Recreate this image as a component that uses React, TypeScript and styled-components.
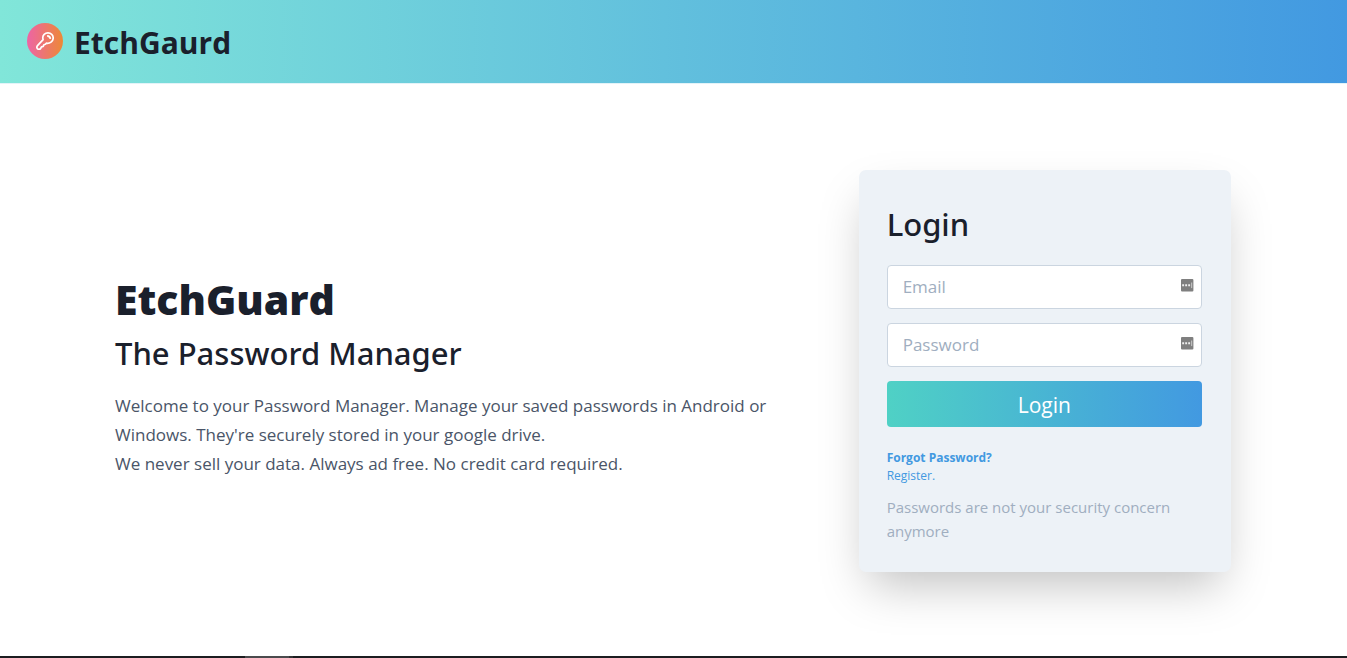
import React from "react";
import styled, { createGlobalStyle } from "styled-components";

const GlobalStyle = createGlobalStyle`
  *, *::before, *::after { box-sizing: border-box; }
  body {
    margin: 0;
    background: #fff;
    color: #1a202c;
    font-family: "Open Sans", "Noto Sans", sans-serif;
  }
  h1, h2, p { margin: 0; }
`;

const Page = styled.div`
  min-height: 100vh;
  display: flex;
  flex-direction: column;
`;

const Header = styled.header`
  display: flex;
  align-items: center;
  padding: 17px 27px 18px;
  border-bottom: 1px solid #e3f3f8;
  background: linear-gradient(to right, #81e6d9, #4299e1);
  background-clip: padding-box;
`;

const Brand = styled.a`
  display: flex;
  align-items: center;
  gap: 11px;
  color: inherit;
  text-decoration: none;
`;

const Badge = styled.span`
  display: flex;
  align-items: center;
  justify-content: center;
  width: 36px;
  height: 36px;
  border-radius: 50%;
  background: linear-gradient(to right, #ed64a6, #ed8936);
`;

const BrandName = styled.span`
  padding-top: 4px;
  font-size: 30px;
  line-height: 44px;
  font-weight: 700;
`;

const Main = styled.main`
  flex: 1;
  display: grid;
  grid-template-columns: minmax(0, 2fr) minmax(0, 1fr);
  align-items: center;
  width: 100%;
  max-width: 1261px;
  margin: 0 auto;
  padding: 86px 73px 84px 71px;
`;

const Hero = styled.section`
  padding: 5px 58px 0 1px;
`;

const HeroTitle = styled.h1`
  font-size: 41px;
  line-height: 58px;
  font-weight: 800;
`;

const Heading = styled.h2`
  font-family: "Noto Sans", "Open Sans", sans-serif;
  font-size: 31px;
  line-height: 50px;
  font-weight: 500;
`;

const HeroText = styled.p`
  margin-top: 13px;
  color: #4a5568;
  font-size: 17px;
  line-height: 29px;
`;

const Card = styled.form`
  display: flex;
  flex-direction: column;
  padding: 29px 29px 29px 28px;
  border-radius: 7px;
  background: #edf2f7;
  box-shadow: 0 22px 45px -10px rgba(0, 0, 0, 0.25);
`;

const CardTitle = styled(Heading)`
  margin-bottom: 16px;
`;

const Field = styled.label`
  position: relative;
  display: block;
  margin-bottom: 14px;
`;

const Input = styled.input`
  display: block;
  width: 100%;
  height: 44px;
  padding: 0 36px 2px 15px;
  border: 1px solid #cbd5e0;
  border-radius: 4px;
  background: #fff;
  color: #4a5568;
  font: inherit;
  font-size: 17px;
  &::placeholder { color: #a0aec0; opacity: 1; }
`;

const FillIcon = styled.svg`
  position: absolute;
  top: 14px;
  right: 8px;
  width: 13px;
  height: 13px;
`;

const Submit = styled.button`
  height: 46px;
  margin-bottom: 22px;
  padding: 2px 0 0;
  border: 0;
  border-radius: 4px;
  background: linear-gradient(to right, #4fd1c5, #4299e1);
  color: #fff;
  font: inherit;
  font-size: 21px;
`;

const FormLink = styled.a<{ $strong?: boolean }>`
  align-self: flex-start;
  color: #4299e1;
  font-size: 12px;
  line-height: 18px;
  font-weight: ${(p) => (p.$strong ? 700 : 400)};
  text-decoration: none;
`;

const Note = styled.p`
  margin-top: 10px;
  color: #a0aec0;
  font-size: 15px;
  line-height: 24px;
`;

const Strip = styled.footer`
  height: 2px;
  background: linear-gradient(to right, #1c1d20 245px, #4b4b4d 245px, #4b4b4d 289px, #333335 289px, #333335 293px, #1c1d20 293px);
`;

function KeyIcon() {
  return (
    <svg width="18" height="18" viewBox="0 0 18 18" fill="none" stroke="#fff" strokeWidth="1.7" strokeLinecap="round" strokeLinejoin="round" aria-hidden="true">
      <path d="M7.1 7.7 1.5 13.6C.3 15 .9 16.7 2.2 17.2c1.1.4 2-.2 2.5-.8l.8-1.6 1.7-.4.7-1.6 1.5-.5.9-1.1c3.6.5 6.8-1.7 6.9-5.2C17.2 2.9 14.9.9 12 .9 8.8.9 6.700 3.2 6.8 5.8c0 .7.1 1.3.3 1.900Z" />
      <path d="M11.9 3.900c1.300.2 2.100 1 2.300 2.200" strokeWidth="2" />
    </svg>
  );
}

function AutofillIcon() {
  return (
    <FillIcon viewBox="0 0 13 13" aria-hidden="true">
      <rect width="12.4" height="12.4" rx="1" fill="#7f7f7f" />
      <path d="M1.2 6.3h1.9M4.2 6.3h1.9M7.2 6.3h1.9" stroke="#eee" strokeWidth="1.9" />
      <path d="M10.7 3.5v5.6" stroke="#ccc" strokeWidth="1" />
    </FillIcon>
  );
}

function TextField({ name, type }: { name: string; type: string }) {
  return (
    <Field>
      <Input type={type} placeholder={name} aria-label={name} />
      <AutofillIcon />
    </Field>
  );
}

export default function App() {
  return (
    <Page>
      <GlobalStyle />
      <Header>
        <Brand href="#">
          <Badge><KeyIcon /></Badge>
          <BrandName>EtchGaurd</BrandName>
        </Brand>
      </Header>
      <Main>
        <Hero>
          <HeroTitle>EtchGuard</HeroTitle>
          <Heading>The Password Manager</Heading>
          <HeroText>
            Welcome to your Password Manager. Manage your saved passwords in Android or
            Windows. They're securely stored in your google drive.
            <br />
            We never sell your data. Always ad free. No credit card required.
          </HeroText>
        </Hero>
        <Card onSubmit={(e) => e.preventDefault()}>
          <CardTitle>Login</CardTitle>
          <TextField name="Email" type="email" />
          <TextField name="Password" type="password" />
          <Submit type="submit">Login</Submit>
          <FormLink href="#" $strong>Forgot Password?</FormLink>
          <FormLink href="#">Register.</FormLink>
          <Note>Passwords are not your security concern anymore</Note>
        </Card>
      </Main>
      <Strip />
    </Page>
  );
}
